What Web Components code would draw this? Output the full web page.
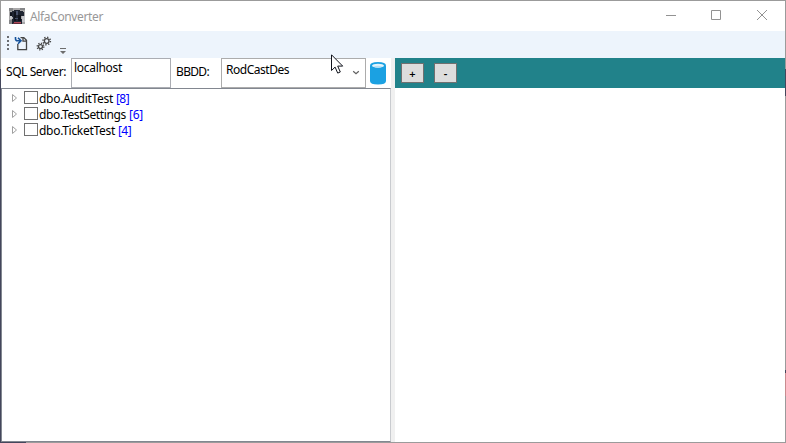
<!DOCTYPE html>
<html lang="en"><head><meta charset="utf-8"><title>AlfaConverter</title>
<style>html,body{margin:0;width:786px;height:443px;overflow:hidden;background:#fff}</style></head>
<body><app-window></app-window>
<script>
function define(name, html, after) {
  const t = document.createElement('template');
  t.innerHTML = html;
  customElements.define(name, class extends HTMLElement {
    connectedCallback() {
      if (this.shadowRoot) return;
      this.attachShadow({mode: 'open'}).append(t.content.cloneNode(true));
      if (after) after(this);
    }
  });
}
// Label whose tracking is adjusted so that its text fills the "w" attribute.
define('fit-label', `<style>:host{display:inline-block;white-space:pre;flex:none}span{display:inline-block}</style><span><slot></slot></span>`, el => {
  const s = el.shadowRoot.querySelector('span'), w = +el.getAttribute('w');
  const n = el.textContent.length;
  s.style.letterSpacing = ((w - s.getBoundingClientRect().width) / n) + 'px';
  el.style.width = w + 'px';
});
define('title-bar', `<style>
:host{display:flex;height:30px;align-items:center;box-sizing:border-box;padding-left:8px;background:#fff;color:#999;font-size:12px}
.dog{margin-right:5px;flex:none}.caps{margin-left:auto;display:flex}.caps svg{display:block}fit-label{padding-top:1px}
</style>
<svg class="dog" width="16" height="16" viewBox="0 0 16 16" shape-rendering="crispEdges"><path fill="#aaa9aa" d="M0 0h16v16H0z"/><path fill="#858688" d="M0 0h4v3H0zM11 0h5v2h-5zM0 12h3v4H0z"/><path fill="#c5c6cb" d="M13 8h3v6h-3zM1 8h2v3H1z"/><path fill="#202532" d="M1 4h2V3h2V2h6v1h3v1h1v4h-3v3h1v5H3v-5h1V9H3V8H1z"/><path fill="#10131c" d="M5 4h2v9H5zM9 7h3v6H9zM1 5h2v3H1z"/><path fill="#48516a" d="M7 3h2v4H7zM6 10h3v1H6z"/><path fill="#b34a58" d="M5 14h7v1H5z"/><path fill="#642b38" d="M4 15h8v1H4z"/></svg>
<fit-label w="73">AlfaConverter</fit-label>
<div class="caps"><svg width="139" height="30" viewBox="0 0 139 30" fill="none" stroke="#929292"><path d="M20 14.500h10M65.500 9.500h9v9h-9zM111 9l10 10M121 9l-10 10"/></svg></div>`);
define('tool-bar', `<style>:host{display:flex;height:27px;background:#edf4fc}svg{display:block}</style>
<svg width="70" height="27" viewBox="0 0 70 27" fill="none">
<path d="M6 5h2v2H6zM6 9h2v2H6zM6 13h2v2H6zM6 17h2v2H6z" fill="#6a6c70"/>
<path d="M19.500 6.600h3.300l2.700 2.700v9.300h-8.700v-5.500M22 7v3.200h3.500" stroke="#444" stroke-width="1.300"/>
<path d="M14.500 6v1.800q0 2 2 2h3M17 6.700l3 3-3 3" stroke="#17539b" stroke-width="1.600"/>
<g stroke="#484848"><circle cx="45.700" cy="10" r="2.300" stroke-width="1.300"/><circle cx="45.700" cy="10" r="3.700" stroke-width="1.500" stroke-dasharray="1.300 1.600"/><circle cx="39.500" cy="15.600" r="2" stroke-width="1.300"/><circle cx="39.500" cy="15.600" r="3.300" stroke-width="1.400" stroke-dasharray="1.200 1.390"/></g>
<path d="M59 17h6v1h-6zM59 20h6l-3 3z" fill="#6d6d6d"/></svg>`);
define('text-field', `<style>:host{display:block;box-sizing:border-box;width:100px;height:30px;border:1px solid #abadb3;background:#fff;padding:1px 2px;line-height:16px}</style><slot></slot>`);
define('combo-box', `<style>:host{display:flex;justify-content:space-between;box-sizing:border-box;width:145px;height:30px;border:1px solid #acacac;background:#fff;padding:3px 5px 0 4px;line-height:16px}svg{margin-top:8px}</style><slot></slot><svg width="8" height="6" fill="none" stroke="#606060" stroke-width="1.200"><path d="M1.200 1.300L4 3.800 6.800 1.300"/></svg>`);
define('db-icon', `<style>:host{display:block;width:16px;height:22px}svg{display:block}</style><svg width="16" height="23" viewBox="0 0 16 23"><path fill="#1ba1e2" d="M0 3.500Q0 0 8 0t8 3.500V19q0 3.500-8 3.500T0 19z"/><ellipse cx="8" cy="3.700" rx="6" ry="2" fill="#e3f3fb"/><path d="M3.500 4.700q4.500-2 9 0-4.500 1.800-9 0z" fill="#b5dff5"/></svg>`);
define('connection-row', `<style>:host{display:flex;height:30px;align-items:flex-start;padding-left:5px;background:#fff}.lab{line-height:16px;margin-top:6px}.f{margin-left:5px}.b{margin-left:5px}combo-box{margin-left:12px}db-icon{margin:4px 0 0 4px}</style>
<fit-label class="lab" w="60">SQL Server:</fit-label><text-field class="f"><fit-label w="48">localhost</fit-label></text-field><fit-label class="lab b" w="33">BBDD:</fit-label><combo-box><fit-label w="63">RodCastDes</fit-label></combo-box><db-icon></db-icon>`);
define('tree-item', `<style>:host{display:flex;height:16px;line-height:18px;padding-left:9px}.a{flex:none}i{box-sizing:border-box;width:14px;height:13px;border:1px solid #707070;background:#fff;margin:1px 1px 0 6px;flex:none}</style><svg class="a" width="7" height="16" fill="none" stroke="#a0a0a0"><path d="M1.500 4.500v7L5.500 8z"/></svg><i></i><slot></slot>`);
define('tree-view', `<style>:host{display:block;box-sizing:border-box;flex:1;border:1px solid #828790;border-right-color:#c9cbcf;padding-top:1px;background:#fff}.n{color:#00f;margin-left:3px}</style>
<tree-item><fit-label w="74">dbo.AuditTest</fit-label><fit-label class="n" w="13">[8]</fit-label></tree-item>
<tree-item><fit-label w="87">dbo.TestSettings</fit-label><fit-label class="n" w="14">[6]</fit-label></tree-item>
<tree-item><fit-label w="76">dbo.TicketTest</fit-label><fit-label class="n" w="13">[4]</fit-label></tree-item>`);
define('small-button', `<style>:host{display:flex;box-sizing:border-box;width:23px;height:20px;border:1px solid #707070;background:#ddd;justify-content:center;align-items:center;line-height:16px;font-size:11px;font-weight:600;padding-top:1px}</style><slot></slot>`);
define('result-pane', `<style>:host{display:flex;flex-direction:column;flex:1;background:#fff}div{height:30px;box-sizing:border-box;background:#21828a;padding:5px 6px;display:flex;gap:10px}</style><div><small-button>+</small-button><small-button>-</small-button></div>`);
define('mouse-pointer', `<style>:host{position:absolute;left:330px;top:53px;width:13px;height:21px}svg{display:block}</style><svg width="13" height="21" viewBox="0 0 13 21"><path d="M.5.800v15.700l3.600-3.400 2.600 6 2.600-1.100-2.600-5.900h5z" fill="#fff" stroke="#10131c"/></svg>`);
define('app-window', `<style>
:host{display:flex;flex-direction:column;position:relative;box-sizing:border-box;width:786px;height:443px;border:1px solid #9b9b9b;font:12px/16px "Noto Sans","Open Sans",sans-serif;color:#000;background:#fff}
.main{display:flex;flex:1;min-height:0}.left{width:390px;display:flex;flex-direction:column;flex:none}.split{width:4px;background:#f0f0f0;flex:none}
.edge{position:absolute;width:1px;background:#44465c}.l{left:-1px;top:68px;bottom:-1px}.r{right:-1px;top:68px;height:27px}.r2{right:-1px;top:369px;height:3px}.r3{right:-1px;top:372px;height:23px;background:#c88c8f}.bt{left:-1px;bottom:-1px;width:26px;height:1px}
</style><title-bar></title-bar><tool-bar></tool-bar><div class="main"><div class="left"><connection-row></connection-row><tree-view></tree-view></div><div class="split"></div><result-pane></result-pane></div><mouse-pointer></mouse-pointer><div class="edge l"></div><div class="edge r"></div><div class="edge r2"></div><div class="edge r3"></div><div class="edge bt"></div>`);
</script></body></html>
